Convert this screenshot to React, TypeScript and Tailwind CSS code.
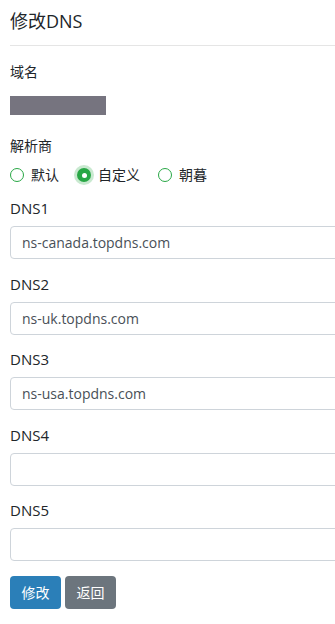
import React from "react";

const font = { fontFamily: '"Open Sans", "Noto Sans CJK SC", sans-serif' };

function Radio({ label, checked }: { label: string; checked?: boolean }) {
  return (
    <label className="flex items-center gap-[7px]">
      {checked ? (
        <span className="flex h-[14px] w-[14px] items-center justify-center rounded-full bg-[#28a745] shadow-[0_0_0_3px_rgba(40,167,69,0.25)]">
          <span className="h-[5px] w-[5px] rounded-full bg-white" />
        </span>
      ) : (
        <span className="h-[14px] w-[14px] rounded-full border border-[#28a745] bg-white" />
      )}
      <span className="text-[14px] leading-[20px] text-[#212529]">{label}</span>
    </label>
  );
}

function Field({ label, value }: { label: string; value: string }) {
  return (
    <div className="mb-[14.5px]">
      <div className="mb-[7px] text-[15px] leading-[21px] text-[#212529]">{label}</div>
      <div className="flex h-[33px] w-[360px] items-center rounded-[4px] border border-[#ced4da] bg-white px-[11px] text-[14px] text-[#495057]">
        {value}
      </div>
    </div>
  );
}

export default function App() {
  return (
    <div className="w-[335px] overflow-hidden bg-white" style={font}>
      <div className="w-[360px] pl-[10px] pt-[8px]">
        <div className="text-[18px] leading-[26px] text-[#212529]">修改DNS</div>
        <div className="mt-[11px] h-px bg-[#e5e5e5]" />
        <div className="mt-[16px] text-[14px] leading-[20px] text-[#212529]">域名</div>
        <div className="mt-[14px] h-[19px] w-[96px] bg-[#76747f]" />
        <div className="mt-[21px] text-[14px] leading-[20px] text-[#212529]">解析商</div>
        <div className="mt-[9px] flex h-[20px] items-center gap-[18px]">
          <Radio label="默认" />
          <Radio label="自定义" checked />
          <Radio label="朝暮" />
        </div>
        <div className="mt-[13px]">
          <Field label="DNS1" value="ns-canada.topdns.com" />
          <Field label="DNS2" value="ns-uk.topdns.com" />
          <Field label="DNS3" value="ns-usa.topdns.com" />
          <Field label="DNS4" value="" />
          <Field label="DNS5" value="" />
        </div>
        <div className="flex gap-[4px] pb-[15px]">
          <button className="h-[33px] w-[51px] rounded-[4px] bg-[#2b7fb8] text-[14px] text-white">修改</button>
          <button className="h-[33px] w-[51px] rounded-[4px] bg-[#6c757d] text-[14px] text-white">返回</button>
        </div>
      </div>
    </div>
  );
}
